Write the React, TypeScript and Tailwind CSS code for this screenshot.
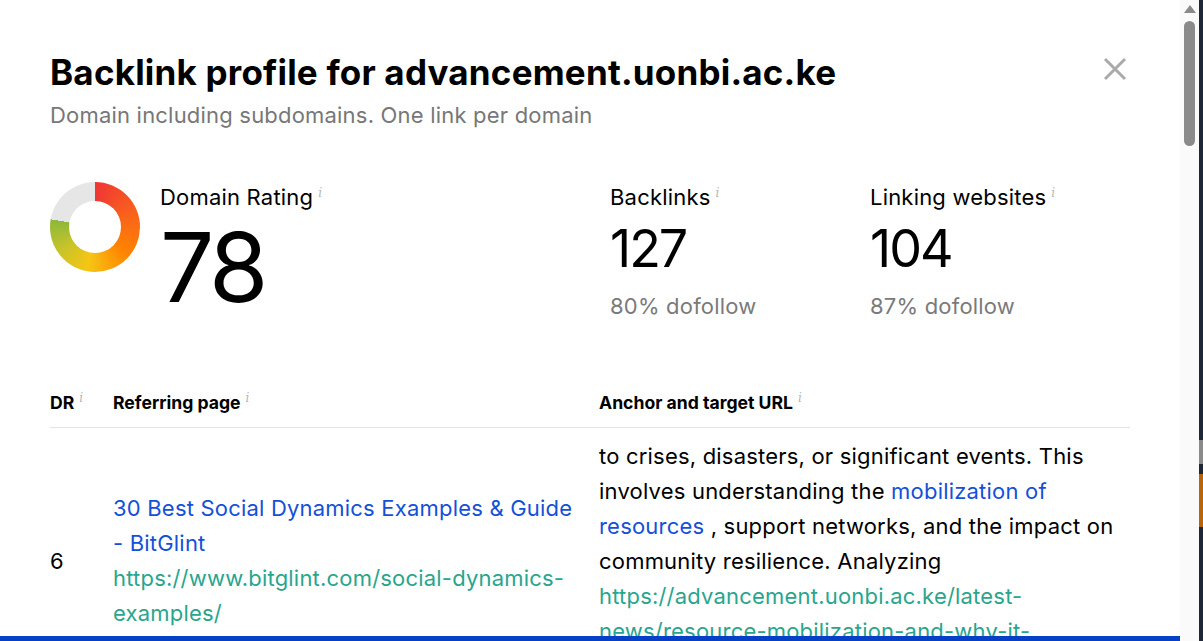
const Info = () => (
    <span className="ml-[5px] align-super text-[12px] font-normal italic leading-none text-[#b5b5b5] [font-family:'DejaVu_Serif',serif]">i</span>
)

const Donut = () => (
    <div className="flex h-[90px] w-[90px] items-center justify-center rounded-full bg-[conic-gradient(#ef3535_0deg,#f85c20_60deg,#ff8400_130deg,#f6c514_190deg,#c8c428_235deg,#8db83c_280deg,#e6e6e6_280deg)]">
        <div className="h-[52px] w-[52px] rounded-full bg-white" />
    </div>
)

const Stat = ({ label = '', value = '', sub = '' }) => (
    <div className="mt-[3px] flex flex-col">
        <div className="text-[22px] leading-[24px] tracking-[0.2px] text-black">
            {label}
            <Info />
        </div>
        <div className="mt-[14px] text-[52px] leading-[52px] tracking-[-2px] text-black">{value}</div>
        <div className="mt-[19px] text-[22px] leading-[24px] tracking-[0.2px] text-[#7a7a7a]">{sub}</div>
    </div>
)

export default function App() {
    return (
        <div className="flex h-[641px] w-full overflow-hidden bg-white [font-family:Inter,'Noto_Sans',sans-serif]">
            <div className="relative flex-1 overflow-hidden">
                <div className="px-[50px] pt-[52px]">
                    <div className="flex items-start justify-between">
                        <div>
                            <h1 className="text-[35px] font-bold leading-[40px] tracking-[0.2px] text-black">
                                Backlink profile for advancement.uonbi.ac.ke
                            </h1>
                            <p className="mt-[9px] text-[22px] leading-[28px] tracking-[0.2px] text-[#777]">
                                Domain including subdomains. One link per domain
                            </p>
                        </div>
                        <button className="mr-[3px] mt-[5px]">
                            <svg width="24" height="24" viewBox="0 0 24 24" fill="none" stroke="#aaaaaa" strokeWidth="3">
                                <path d="M2 2 L22 22 M22 2 L2 22" />
                            </svg>
                        </button>
                    </div>

                    <div className="mt-[53px] flex">
                        <div className="flex w-[560px]">
                            <Donut />
                            <div className="ml-[20px] mt-[3px]">
                                <div className="text-[22px] leading-[24px] tracking-[0.2px] text-black">
                                    Domain Rating
                                    <Info />
                                </div>
                                <div className="mt-[10px] text-[96px] leading-[96px] tracking-[-4px] text-black">78</div>
                            </div>
                        </div>
                        <div className="w-[260px]">
                            <Stat label="Backlinks" value="127" sub="80% dofollow" />
                        </div>
                        <div>
                            <Stat label="Linking websites" value="104" sub="87% dofollow" />
                        </div>
                    </div>

                    <div className="mt-[74px]">
                        <div className="flex border-b border-[#e3e3e3] pb-[14px] text-[17.6px] font-bold leading-[20px] text-black">
                            <div className="w-[63px]">DR<Info /></div>
                            <div className="w-[486px]">Referring page<Info /></div>
                            <div className="flex-1">Anchor and target URL<Info /></div>
                        </div>
                        <div className="flex items-center pt-[11px] text-[22px] leading-[35px] tracking-[0.2px]">
                            <div className="w-[63px] text-black">6</div>
                            <div className="w-[486px] pr-[20px]">
                                <div className="text-[#1450d8]">30 Best Social Dynamics Examples &amp; Guide - BitGlint</div>
                                <div className="text-[#29a58e]">https://www.bitglint.com/social-dynamics-examples/</div>
                            </div>
                            <div className="flex-1">
                                <div className="text-black">
                                    to crises, disasters, or significant events. This involves understanding the{' '}
                                    <span className="text-[#1450d8]">mobilization of resources</span> , support networks, and the impact on community resilience. Analyzing
                                </div>
                                <div className="text-[#29a58e]">
                                    https://advancement.uonbi.ac.ke/latest-news/resource-mobilization-and-why-it-
                                    <br />
                                    matters/
                                </div>
                            </div>
                        </div>
                    </div>
                </div>
                <div className="absolute bottom-0 left-0 right-0 h-[5px] bg-[#0540c6]" />
            </div>

            <div className="flex w-[19px] flex-col items-center bg-[#fafafa] pt-[5px]">
                <div className="h-0 w-0 border-x-[6px] border-b-[8px] border-x-transparent border-b-[#8a8a8a]" />
                <div className="mt-[8px] h-[125px] w-[11px] rounded-full bg-[#8a8a8a]" />
            </div>

            <div className="flex w-[4px] flex-col bg-[#1e2738]">
                <div className="h-[440px]" />
                <div className="h-[24px] bg-[#8a8a8a]" />
                <div className="h-[10px]" />
                <div className="h-[53px] bg-[#b8650a]" />
            </div>
        </div>
    )
}
